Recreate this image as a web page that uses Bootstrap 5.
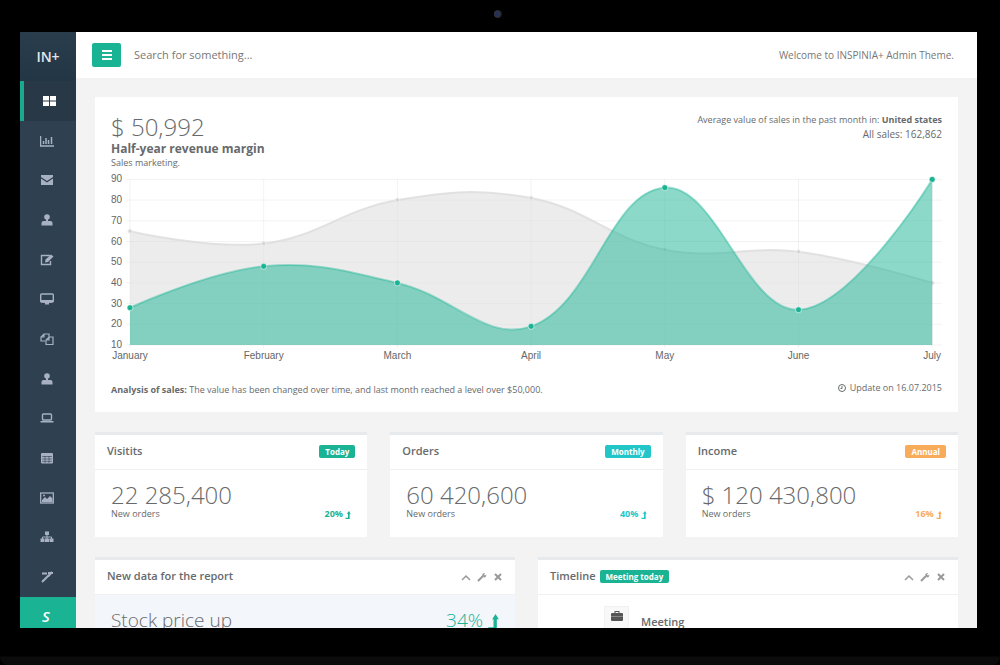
<!DOCTYPE html>
<html lang="en">
<head>
    <meta charset="UTF-8">
    <meta name="viewport" content="width=device-width, initial-scale=1.0">
    <title>INSPINIA+ Admin Theme</title>
    <link rel="stylesheet" href="https://cdn.jsdelivr.net/npm/bootstrap@5.3.0/dist/css/bootstrap.min.css">
    <style>
        body {
            background-color: #000;
            color: #676a6c;
            font-family: "Open Sans", "Noto Sans", sans-serif;
            font-size: 9px;
            line-height: 14px;
        }
        /* monitor frame */
        .monitor {
            padding: 32px 23px 37px 20px;
            border-radius: 8px;
            background: linear-gradient(to top, #0b0b0c 8px, #000 9px);
        }
        .camera {
            position: absolute;
            top: 10px;
            left: 50%;
            width: 8px;
            height: 8px;
            margin-left: -6px;
            border-radius: 50%;
            background: radial-gradient(circle at 35% 50%, #1b2c6c 0, #32353f 45%, #000 100%);
        }
        .sidebar {
            width: 56px;
            background-color: #2f4050;
        }
        .brand {
            height: 49px;
            font-size: 14px;
            color: #e3e6ea;
            background: linear-gradient(#2a3d4d, #233645);
        }
        .sidebar a {
            color: #a7b1c2;
            border-left: 4px solid transparent;
            padding-right: 6px;
        }
        .sidebar a.active {
            color: #fff;
            background-color: #293846;
            border-left-color: #19aa8d;
            padding-right: 2px;
        }
        .sidebar a.special {
            height: 31px;
            padding-top: 12px;
            padding-right: 8px;
            color: #fff;
            background-color: #1ab394;
            font-size: 15px;
            font-style: italic;
        }
        .sidebar svg {
            width: 14px;
            height: 14px;
        }
        .page {
            background-color: #f3f3f4;
        }
        .topbar {
            height: 46px;
            padding: 0 23px 0 16px;
            font-size: 10px;
            color: #777;
        }
        .btn-menu {
            width: 29px;
            height: 24px;
            padding: 0;
            border-radius: 2px;
            background-color: #1ab394;
            line-height: 1;
        }
        .search {
            font-size: 11px;
            padding: 0 13px;
        }
        .search::placeholder {
            color: #777;
        }
        .content {
            padding: 19px;
        }
        .content > * + * {
            margin-top: 20px;
        }
        .panels {
            display: grid;
            gap: 23px;
        }
        .panels-3 {
            grid-template-columns: repeat(3, 1fr);
        }
        .panels-2 {
            grid-template-columns: repeat(2, 1fr);
        }
        .revenue {
            padding: 16px 16px 15px;
        }
        .figure-big {
            font-size: 24px;
            font-weight: 300;
            line-height: 28px;
        }
        .sub-title {
            font-size: 12px;
            font-weight: 700;
            line-height: 16px;
        }
        .note {
            line-height: 12px;
        }
        .all-sales {
            font-size: 10px;
        }
        .chart text {
            font-family: "Liberation Sans", Arial, sans-serif;
            font-size: 10px;
            fill: #666;
        }
        .panel {
            border-top: 3px solid #e7eaec;
        }
        .panel-head {
            height: 35px;
            padding: 0 12px 2px;
            border-bottom: 1px solid #eef0f1;
            font-size: 11px;
            font-weight: 600;
        }
        .panel-body {
            padding: 11px 16px;
        }
        .stat-body {
            padding-bottom: 17px;
        }
        .stat-body .note {
            margin-top: -1px;
        }
        .tag {
            padding: 0 6px;
            border-radius: 2px;
            color: #fff;
            font-size: 8px;
            font-weight: 700;
            line-height: 13px;
        }
        .bg-teal { background-color: #1ab394; }
        .bg-aqua { background-color: #23c6c8; }
        .bg-amber { background-color: #f8ac59; }
        .text-teal { color: #1ab394; }
        .text-aqua { color: #23c6c8; }
        .text-amber { color: #f8ac59; }
        .tools {
            gap: 6px;
        }
        .tools button {
            color: #999;
            width: 10px;
            height: 12px;
        }
        .stock {
            background-color: #f3f6fb;
            font-size: 19px;
            font-weight: 300;
            line-height: 28px;
        }
        .stamp {
            width: 25px;
            height: 26px;
            margin-left: 50px;
            padding-top: 4px;
            border: 1px solid #f0f1f2;
            background-color: #f8f8f8;
            color: #555;
        }
        .event {
            padding: 9px 12px;
            font-size: 11px;
            font-weight: 600;
        }
    </style>
</head>
<body>

    <div class="monitor vh-100 overflow-hidden position-relative">
        <span class="camera"></span>
        <div class="d-flex h-100 overflow-hidden">

            <nav class="sidebar d-flex flex-column flex-shrink-0" id="sidebar">
                <div class="brand d-flex align-items-center justify-content-center fw-semibold">IN+</div>
                <!-- Menu links will be added here -->
            </nav>

            <main class="page flex-grow-1 overflow-hidden">
                <header class="topbar bg-white d-flex align-items-center">
                    <button class="btn-menu btn text-white" type="button" aria-label="Toggle menu">
                        <svg class="d-block mx-auto" width="10" height="10" viewBox="0 0 10 10" stroke="currentColor" stroke-width="2"><path d="M0 1h10M0 5h10M0 9h10"/></svg>
                    </button>
                    <input class="search border-0 bg-transparent flex-grow-1" type="text" placeholder="Search for something..." aria-label="Search">
                    <span>Welcome to INSPINIA+ Admin Theme.</span>
                </header>

                <div class="content">
                    <section class="revenue bg-white">
                        <div class="d-flex justify-content-between">
                            <div>
                                <div class="figure-big">$ 50,992</div>
                                <div class="sub-title">Half-year revenue margin</div>
                                <div class="note">Sales marketing.</div>
                            </div>
                            <div class="text-end">
                                <div>Average value of sales in the past month in: <strong>United states</strong></div>
                                <div class="all-sales">All sales: 162,862</div>
                            </div>
                        </div>
                        <svg class="chart d-block w-100" id="chart" viewBox="0 0 831 194"></svg>
                        <div class="d-flex justify-content-between pt-3">
                            <div class="pt-1"><strong>Analysis of sales:</strong> The value has been changed over time, and last month reached a level over $50,000.</div>
                            <div class="d-flex align-items-center gap-1">
                                <svg width="8" height="8" viewBox="0 0 8 8" fill="none" stroke="currentColor"><circle cx="4" cy="4" r="3.5"/><path d="M4 2v2.5H2.5"/></svg>
                                Update on 16.07.2015
                            </div>
                        </div>
                    </section>

                    <div class="panels panels-3" id="stats">
                        <!-- Stat panels will be added here -->
                    </div>

                    <div class="panels panels-2">
                        <section class="panel bg-white">
                            <div class="panel-head d-flex align-items-center justify-content-between">
                                <span>New data for the report</span>
                                <div class="tools d-flex"></div>
                            </div>
                            <div class="panel-body stock d-flex justify-content-between">
                                <span>Stock price up</span>
                                <span class="text-teal">34% <svg width="11" height="16" viewBox="0 0 8 12" fill="currentColor"><path d="M5.500 0L8 4H6.500v8H.5L0 10h4V4H3z"/></svg></span>
                            </div>
                        </section>
                        <section class="panel bg-white">
                            <div class="panel-head d-flex align-items-center">
                                <span>Timeline</span>
                                <span class="tag bg-teal ms-1">Meeting today</span>
                                <div class="tools d-flex ms-auto"></div>
                            </div>
                            <div class="panel-body d-flex">
                                <div class="stamp d-flex justify-content-center">
                                    <svg width="12" height="10" viewBox="0 0 12 10" fill="currentColor"><path d="M3.500 2V0h5v2H11q1 0 1 1v6q0 1-1 1H1q-1 0-1-1V3q0-1 1-1zM4.500 2h3V1h-3z" fill-rule="evenodd"/><path d="M0 5.500h12" stroke="#aaa" stroke-width=".6"/></svg>
                                </div>
                                <div class="event">Meeting</div>
                            </div>
                        </section>
                    </div>
                </div>
            </main>
        </div>
    </div>

    <script>
        const user = '<circle cx="7" cy="4" r="2.800" fill="currentColor"/><path d="M6 6h2v2h-2zM1.500 12.500V10q0-2 2-2h7q2 0 2 2v2.500z" fill="currentColor"/>';
        const icons = [
            '<path d="M1 2h6v4.500H1zM8 2h6v4.500H8zM1 7.500h6V12H1zM8 7.500h6V12H8z" fill="currentColor"/>',
            '<path d="M.5 2v10H14M3.500 10V7M6 10V4M8.500 10V6M11.500 10V3" fill="none" stroke="currentColor" stroke-width="1.500"/>',
            '<path d="M1 2h12v2L7 8 1 4zM1 5.500l6 4 6-4V12H1z" fill="currentColor"/>',
            user,
            '<path d="M10 2.500H1.500v9h9V8" fill="none" stroke="currentColor" stroke-width="1.400"/><path d="M5 9.500l.5-3L11 1.500 13.500 3.500 8 9z" fill="currentColor"/>',
            '<rect x=".7" y="2" width="12.600" height="8" rx="1" fill="none" stroke="currentColor" stroke-width="1.400"/><path d="M1 8h12v2l-4 1v1.500H5V11l-4-1z" fill="currentColor"/>',
            '<path d="M5 9H1V5l3-3h5v3M4 2v3H1M6 12.500V8l3-3h4v7.500zM9 5v3H6" fill="none" stroke="currentColor" stroke-width="1.200"/>',
            user,
            '<rect x="2.500" y="3" width="9" height="6" rx="1" fill="none" stroke="currentColor" stroke-width="1.400"/><path d="M.5 10h13v1.500H.5z" fill="currentColor"/>',
            '<rect x="1" y="2" width="12" height="10.500" rx="1" fill="currentColor"/><path d="M2 5.500h10M2 8h10M2 10.300h10M5 5v7M9 5v7" stroke="#2f4050" stroke-width=".6"/>',
            '<rect x=".7" y="2" width="12.600" height="10" fill="none" stroke="currentColor" stroke-width="1.300"/><path d="M2 11V9l3-3 2 2 3-3 2.500 2.500V11z" fill="currentColor"/><circle cx="4" cy="4.500" r="1" fill="currentColor"/>',
            '<path d="M5 1.500h4V5H5zM.5 8.500h4V12h-4zM5 8.500h4V12H5zM9.500 8.500h4V12h-4z" fill="currentColor"/><path d="M7 5v4M2.500 9V7h9v2" fill="none" stroke="currentColor"/>',
            '<path d="M2 12l7-7M2 3.500h5M8 3h5M12 2L8 6.500" stroke="currentColor" stroke-width="2"/>'
        ];
        const stats = [
            { title: "Visitits", tag: "Today", value: "22 285,400", percent: "20%", color: "teal" },
            { title: "Orders", tag: "Monthly", value: "60 420,600", percent: "40%", color: "aqua" },
            { title: "Income", tag: "Annual", value: "$ 120 430,800", percent: "16%", color: "amber" }
        ];
        const months = ["January", "February", "March", "April", "May", "June", "July"];

        function displayMenu() {
            const sidebar = document.getElementById("sidebar");
            icons.forEach((icon, i) => {
                sidebar.innerHTML += `<a href="#" aria-label="Menu ${i + 1}" class="flex-fill d-flex align-items-center justify-content-center ${i === 0 ? "active" : ""}">
                    <svg viewBox="0 0 14 14">${icon}</svg></a>`;
            });
            sidebar.innerHTML += '<a href="#" class="special text-center fw-semibold text-decoration-none">S</a>';
        }

        function displayStats() {
            document.getElementById("stats").innerHTML = stats.map((s) => `<section class="panel bg-white">
                <div class="panel-head d-flex align-items-center justify-content-between">
                    <span>${s.title}</span>
                    <span class="tag bg-${s.color}">${s.tag}</span>
                </div>
                <div class="panel-body stat-body">
                    <div class="figure-big">${s.value}</div>
                    <div class="note d-flex justify-content-between">
                        <span>New orders</span>
                        <strong class="text-${s.color}">${s.percent}
                            <svg width="6" height="8" viewBox="0 0 8 12" fill="currentColor"><path d="M5.500 0L8 4H6.500v8H.5L0 10h4V4H2z"/></svg>
                        </strong>
                    </div>
                </div>
            </section>`).join("");
        }

        function displayTools() {
            const shapes = [
                '<path d="M1 8l4-4 4 4" fill="none" stroke="currentColor" stroke-width="1.500"/>',
                '<path d="M1 9l5-5" stroke="currentColor" stroke-width="2"/><path d="M5 3q1-2.500 3-2L7 2.500 8 3.500 9.500 2.500Q9.500 5 7 5.500z" fill="currentColor"/>',
                '<path d="M2 2l6 6M8 2L2 8" stroke="currentColor" stroke-width="2"/>'
            ];
            const names = ["Collapse", "Settings", "Close"];
            document.querySelectorAll(".tools").forEach((el) => {
                el.innerHTML = shapes.map((s, i) => `<button type="button" class="border-0 bg-transparent p-0 d-flex align-items-end" aria-label="${names[i]}">
                    <svg width="10" height="10" viewBox="0 0 10 10">${s}</svg></button>`).join("");
            });
        }

        const px = (i) => 19 + i * 133.7;
        const py = (v) => 176 - (v - 10) * 2.07;

        // smooth line through the points, tension 0.4 except at both ends
        function spline(values) {
            const p = values.map((v, i) => [px(i), py(v)]);
            const handles = p.map((c, i) => {
                if (i === 0 || i === p.length - 1) return [c, c];
                const a = p[i - 1], b = p[i + 1];
                const d1 = Math.hypot(c[0] - a[0], c[1] - a[1]);
                const d2 = Math.hypot(b[0] - c[0], b[1] - c[1]);
                const f1 = 0.4 * d1 / (d1 + d2), f2 = 0.4 * d2 / (d1 + d2);
                return [
                    [c[0] - f1 * (b[0] - a[0]), c[1] - f1 * (b[1] - a[1])],
                    [c[0] + f2 * (b[0] - a[0]), c[1] + f2 * (b[1] - a[1])]
                ];
            });
            let d = `M${p[0]}`;
            for (let i = 1; i < p.length; i++) {
                d += `C${handles[i - 1][1]} ${handles[i][0]} ${p[i]}`;
            }
            return d;
        }

        function series(values, fill, stroke, dot, ring, radius) {
            const line = spline(values);
            return `<path d="${line}L${px(6)} 176L${px(0)} 176Z" fill="${fill}"/>
                <path d="${line}" fill="none" stroke="${stroke}" stroke-width="2"/>` +
                values.map((v, i) => `<circle cx="${px(i)}" cy="${py(v)}" r="${radius}" fill="${dot}" stroke="${ring}"/>`).join("");
        }

        function displayChart() {
            let out = "";
            for (let v = 10; v <= 90; v += 10) {
                out += `<path d="M15 ${py(v)}H831" stroke="#000" stroke-opacity=".05"/>
                    <text x="11" y="${py(v) + 3}" text-anchor="end">${v}</text>`;
            }
            months.forEach((m, i) => {
                out += `<path d="M${px(i)} 10V179" stroke="#000" stroke-opacity=".05"/>
                    <text x="${px(i)}" y="190" text-anchor="middle">${m}</text>`;
            });
            out += series([65, 59, 80, 81, 56, 55, 40], "rgba(220,220,220,.55)", "rgba(220,220,220,.8)", "#d3d3d3", "#eee", 2);
            out += series([28, 48, 40, 19, 86, 27, 90], "rgba(26,179,148,.5)", "rgba(26,179,148,.4)", "#1ab394", "rgba(255,255,255,.6)", 3);
            document.getElementById("chart").innerHTML = out;
        }

        displayMenu();
        displayStats();
        displayTools();
        displayChart();
    </script>
    <script src="https://cdn.jsdelivr.net/npm/bootstrap@5.3.0/dist/js/bootstrap.bundle.min.js"></script>

</body>
</html>
